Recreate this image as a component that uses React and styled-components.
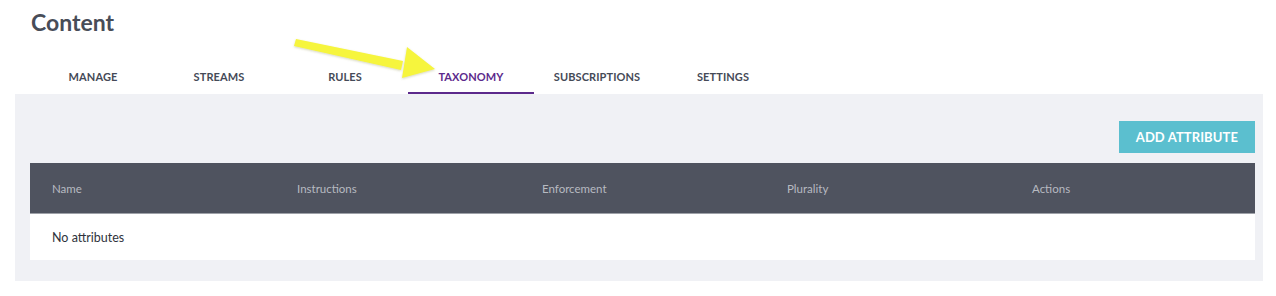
import React from "react";
import styled, { createGlobalStyle } from "styled-components";

const GlobalStyle = createGlobalStyle`
  body {
    margin: 0;
    background: #fff;
    font-family: Lato, "Open Sans", sans-serif;
  }
`;

const tabs = ["MANAGE", "STREAMS", "RULES", "TAXONOMY", "SUBSCRIPTIONS", "SETTINGS"];
const columns = ["Name", "Instructions", "Enforcement", "Plurality", "Actions"];

export default function App() {
  return (
    <Page>
      <GlobalStyle />
      <Title>Content</Title>
      <TabBar>
        {tabs.map((t) => (
          <Tab key={t} active={t === "TAXONOMY"}>
            {t}
          </Tab>
        ))}
      </TabBar>
      <Panel>
        <Toolbar>
          <Button>ADD ATTRIBUTE</Button>
        </Toolbar>
        <Table>
          <HeadRow>
            {columns.map((c) => (
              <HeadCell key={c}>{c}</HeadCell>
            ))}
          </HeadRow>
          <EmptyRow>No attributes</EmptyRow>
        </Table>
      </Panel>
      {/* annotation arrow */}
      <Arrow width="160" height="50" viewBox="0 0 160 50">
        <defs>
          <filter id="sh" x="-10%" y="-30%" width="130%" height="160%">
            <feDropShadow dx="0" dy="1" stdDeviation="1" floodColor="#8a8a40" floodOpacity="0.35" />
          </filter>
        </defs>
        <g filter="url(#sh)" fill="#f6f53d">
          <polygon points="9,5 11,-2 118,20 116,29" transform="translate(0,6)" />
          <polygon points="122,12 150,34 117,43" />
        </g>
      </Arrow>
    </Page>
  );
}

const Page = styled.div`
  position: relative;
  width: 1276px;
  height: 296px;
`;

const Title = styled.h1`
  margin: 0;
  padding: 9px 0 0 31px;
  height: 31px;
  font-size: 23px;
  font-weight: 700;
  color: #484d58;
  line-height: 26px;
`;

const TabBar = styled.nav`
  display: flex;
  padding: 20px 0 0 30px;
`;

const Tab = styled.div`
  width: 126px;
  height: 34px;
  box-sizing: border-box;
  display: flex;
  align-items: center;
  justify-content: center;
  padding-top: 1px;
  font-size: 11px;
  font-weight: 700;
  letter-spacing: 0.1px;
  color: ${(p) => (p.active ? "#5c2a8c" : "#454a57")};
  border-bottom: 2px solid ${(p) => (p.active ? "#5c2a8c" : "transparent")};
`;

const Panel = styled.section`
  margin-left: 15px;
  width: 1248px;
  box-sizing: border-box;
  background: #f0f1f5;
  padding: 27px 8px 21px 15px;
`;

const Toolbar = styled.div`
  display: flex;
  justify-content: flex-end;
  margin-bottom: 10px;
`;

const Button = styled.button`
  height: 32px;
  padding: 0 17px;
  border: none;
  background: #5bbfcf;
  color: #fff;
  font-family: Lato, "Open Sans", sans-serif;
  font-size: 13px;
  font-weight: 700;
  letter-spacing: 0.1px;
  cursor: pointer;
`;

const Table = styled.div`
  background: #fff;
`;

const HeadRow = styled.div`
  display: grid;
  grid-template-columns: repeat(5, 1fr);
  height: 51px;
  align-items: center;
  background: #4f535f;
  border-bottom: 1px solid #9ea1a8;
  box-sizing: border-box;
`;

const HeadCell = styled.div`
  padding-left: 22px;
  font-size: 11.5px;
  color: #b7bac1;
`;

const EmptyRow = styled.div`
  height: 46px;
  display: flex;
  align-items: center;
  padding-left: 22px;
  font-size: 12.5px;
  color: #2f333c;
`;

const Arrow = styled.svg`
  position: absolute;
  left: 285px;
  top: 35px;
  overflow: visible;
`;
